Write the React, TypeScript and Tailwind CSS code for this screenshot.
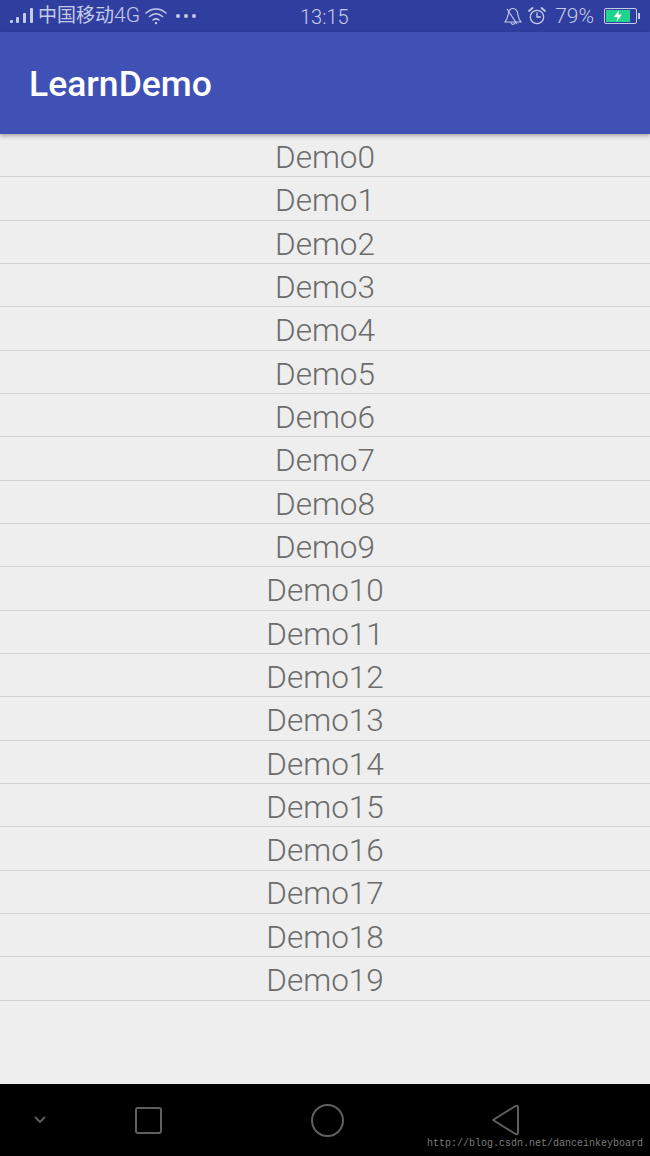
import React from "react";

const demos = Array.from({ length: 20 }, (_, i) => `Demo${i}`);

const StatusBar: React.FC = () => (
  <div className="h-[32px] bg-[#303f9f] flex items-center text-[#c5cbe9] font-['Roboto',sans-serif] relative">
    <svg width="24" height="18" viewBox="0 0 24 18" className="ml-[10px]" fill="#c5cbe9">
      <rect x="0" y="13" width="3" height="3" rx="1" />
      <rect x="6" y="10" width="3" height="6" rx="1" />
      <rect x="13" y="6" width="3" height="10" rx="1" />
      <rect x="20" y="1" width="3" height="15" rx="1" />
    </svg>
    <span className="ml-[4px] mb-[3px] text-[19px] leading-none font-['Noto_Sans_CJK_SC','Roboto',sans-serif] whitespace-nowrap">
      中国移动<span className="text-[21px] font-light font-['Roboto',sans-serif]">4G</span>
    </span>
    <svg width="24" height="20" viewBox="0 0 24 20" className="ml-[4px]" fill="none" stroke="#c5cbe9" strokeWidth="1.5" strokeLinecap="round">
      <path d="M2 7 C8 1.5 16 1.5 22 7" />
      <path d="M5.5 10.5 C9.5 7 14.5 7 18.5 10.5" />
      <path d="M9 14 C11 12.5 13 12.5 15 14" />
      <circle cx="12" cy="17" r="1.2" fill="#c5cbe9" stroke="none" />
    </svg>
    <div className="ml-[8px] flex gap-[4px]">
      <span className="w-[4px] h-[4px] rounded-full bg-[#c5cbe9]" />
      <span className="w-[4px] h-[4px] rounded-full bg-[#c5cbe9]" />
      <span className="w-[4px] h-[4px] rounded-full bg-[#c5cbe9]" />
    </div>
    <span className="absolute left-[300px] top-[7px] text-[20px] leading-[21px] font-light">13:15</span>
    <div className="ml-auto flex items-center mr-[10px]">
      <svg width="20" height="20" viewBox="0 0 20 20" fill="none" stroke="#c5cbe9" strokeWidth="1.2" strokeLinejoin="round">
        <path d="M2 16 C4 14 4.5 12 5 9 C5.5 5 7 2.5 10 2.5 C13 2.5 14.5 5 15 9 C15.5 12 16 14 18 16 Z" />
        <path d="M8 16.5 C8.5 19 11.5 19 12 16.5" />
        <path d="M4 3 L14 18" />
      </svg>
      <svg width="20" height="20" viewBox="0 0 20 20" className="ml-[4px]" fill="none" stroke="#c5cbe9" strokeWidth="1.3" strokeLinecap="round">
        <circle cx="10" cy="11" r="6.7" />
        <path d="M10 7 V11 H13.5" />
        <path d="M2 5 L5.5 2 M18 5 L14.5 2" strokeWidth="1.8" />
      </svg>
      <span className="ml-[8px] text-[21px] leading-none font-light">79%</span>
      <div className="ml-[10px] flex items-center">
        <div className="w-[33px] h-[16px] border border-[#c5cbe9] rounded-[2px] p-[1px] flex bg-[#303f9f]">
          <div className="w-[24px] h-full bg-[#1fd48f] flex items-center justify-center">
            <svg width="10" height="12" viewBox="0 0 10 12" fill="#ffffff">
              <path d="M6 0 L1 7 H4.5 L3.5 12 L9 4.5 H5.5 Z" />
            </svg>
          </div>
        </div>
        <div className="w-[2px] h-[6px] bg-[#c5cbe9] ml-[1px]" />
      </div>
    </div>
  </div>
);

const NavBar: React.FC = () => (
  <div className="h-[72px] bg-[#000000] relative flex items-center">
    <svg width="16" height="10" viewBox="0 0 16 10" fill="none" stroke="#5f5f5f" strokeWidth="1.8" className="ml-[32px]">
      <path d="M3 2 L8 7 L13 2" />
    </svg>
    <div className="ml-[87px] w-[27px] h-[27px] border-2 border-[#5f5f5f] rounded-[3px]" />
    <div className="ml-[149px] w-[33px] h-[33px] border-2 border-[#5f5f5f] rounded-full" />
    <svg width="30" height="32" viewBox="0 0 30 32" fill="none" stroke="#5f5f5f" strokeWidth="2" strokeLinejoin="round" className="ml-[147px]">
      <path d="M2 16 L24.5 2 Q27 1 27 4 V28 Q27 31 24.5 30 Z" />
    </svg>
    <span className="absolute left-[427px] top-[54px] text-[10px] leading-[12px] text-[#7b7b7b] font-['Liberation_Mono',monospace] whitespace-nowrap">
      http://blog.csdn.net/danceinkeyboard
    </span>
  </div>
);

export default function App() {
  return (
    <div className="w-[650px] h-[1156px] flex flex-col bg-[#eeeeee] overflow-hidden">
      <StatusBar />
      <div className="h-[102px] bg-[#3f51b5] flex items-center pl-[29px] pt-[3px] shadow-[0_2px_4px_rgba(0,0,0,0.3)] relative">
        <span className="text-[35.5px] leading-none font-medium text-white font-['Roboto',sans-serif]">LearnDemo</span>
      </div>
      <ul className="flex-1">
        {demos.map((d) => (
          <li
            key={d}
            className="h-[43.33px] pt-[5px] border-b border-[#d3d3d3] flex items-center justify-center text-[31.5px] leading-none text-[#6b6b6b] font-['Roboto',sans-serif] font-light"
          >
            {d}
          </li>
        ))}
      </ul>
      <NavBar />
    </div>
  );
}
